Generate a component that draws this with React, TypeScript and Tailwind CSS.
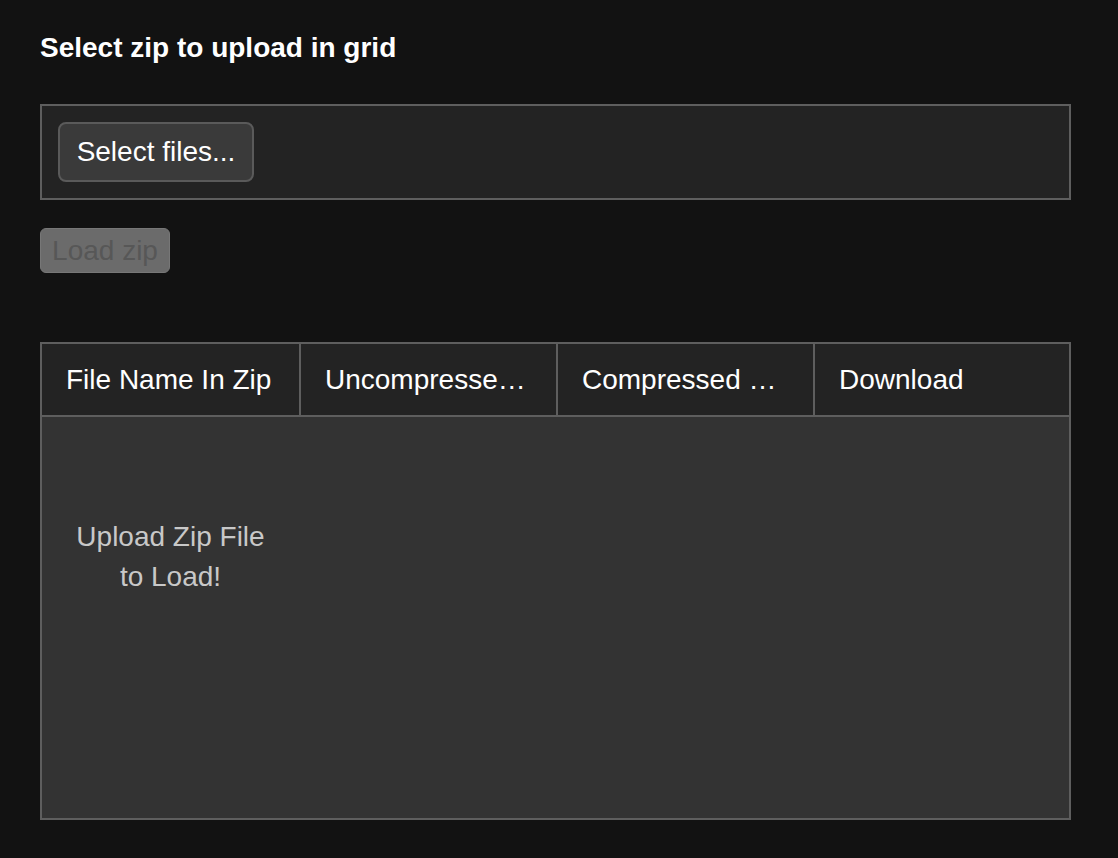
import React from "react"

const columns = ["File Name In Zip", "Uncompressed Size", "Compressed Size", "Download"]

export default function App() {
  return (
    <div className="min-h-screen bg-[#121212] pl-10 pt-[30px] pb-10 text-white" style={{ fontFamily: '"Liberation Sans", Arial, sans-serif' }}>
      <div className="w-[1031px]">
        <h1 className="text-[28px] font-bold leading-[36px]">Select zip to upload in grid</h1>

        <div className="mt-[38px] border-2 border-[#5e5e5e] bg-[#232323] p-4">
          <button className="h-[60px] w-[196px] rounded-[8px] border-2 border-[#5a5a5a] bg-[#3a3a3a] text-[28px] text-white">
            Select files...
          </button>
        </div>

        <button
          disabled
          className="mt-[28px] h-[45px] w-[130px] rounded-[6px] border border-[#777777] bg-[#6b6b6b] text-[28px] text-[#575757]"
        >
          Load zip
        </button>

        <div className="mt-[69px] flex h-[478px] flex-col border-2 border-[#5e5e5e] bg-[#333333]">
          <div className="grid h-[73px] grid-cols-[259px_257px_257px_1fr] border-b-2 border-[#5e5e5e] bg-[#232323]">
            {columns.map((col, i) => (
              <div
                key={col}
                className={
                  "flex min-w-0 items-center px-6 text-[28px] " + (i < 3 ? "border-r-2 border-[#5e5e5e]" : "")
                }
              >
                <span className="truncate whitespace-nowrap">{col}</span>
              </div>
            ))}
          </div>
          <div className="grid flex-1 grid-cols-[257px_1fr]">
            <div className="pt-[100px] text-center text-[28px] leading-[40px] text-[#c8c8c8]">
              Upload Zip File
              <br />
              to Load!
            </div>
          </div>
        </div>
      </div>
    </div>
  )
}
